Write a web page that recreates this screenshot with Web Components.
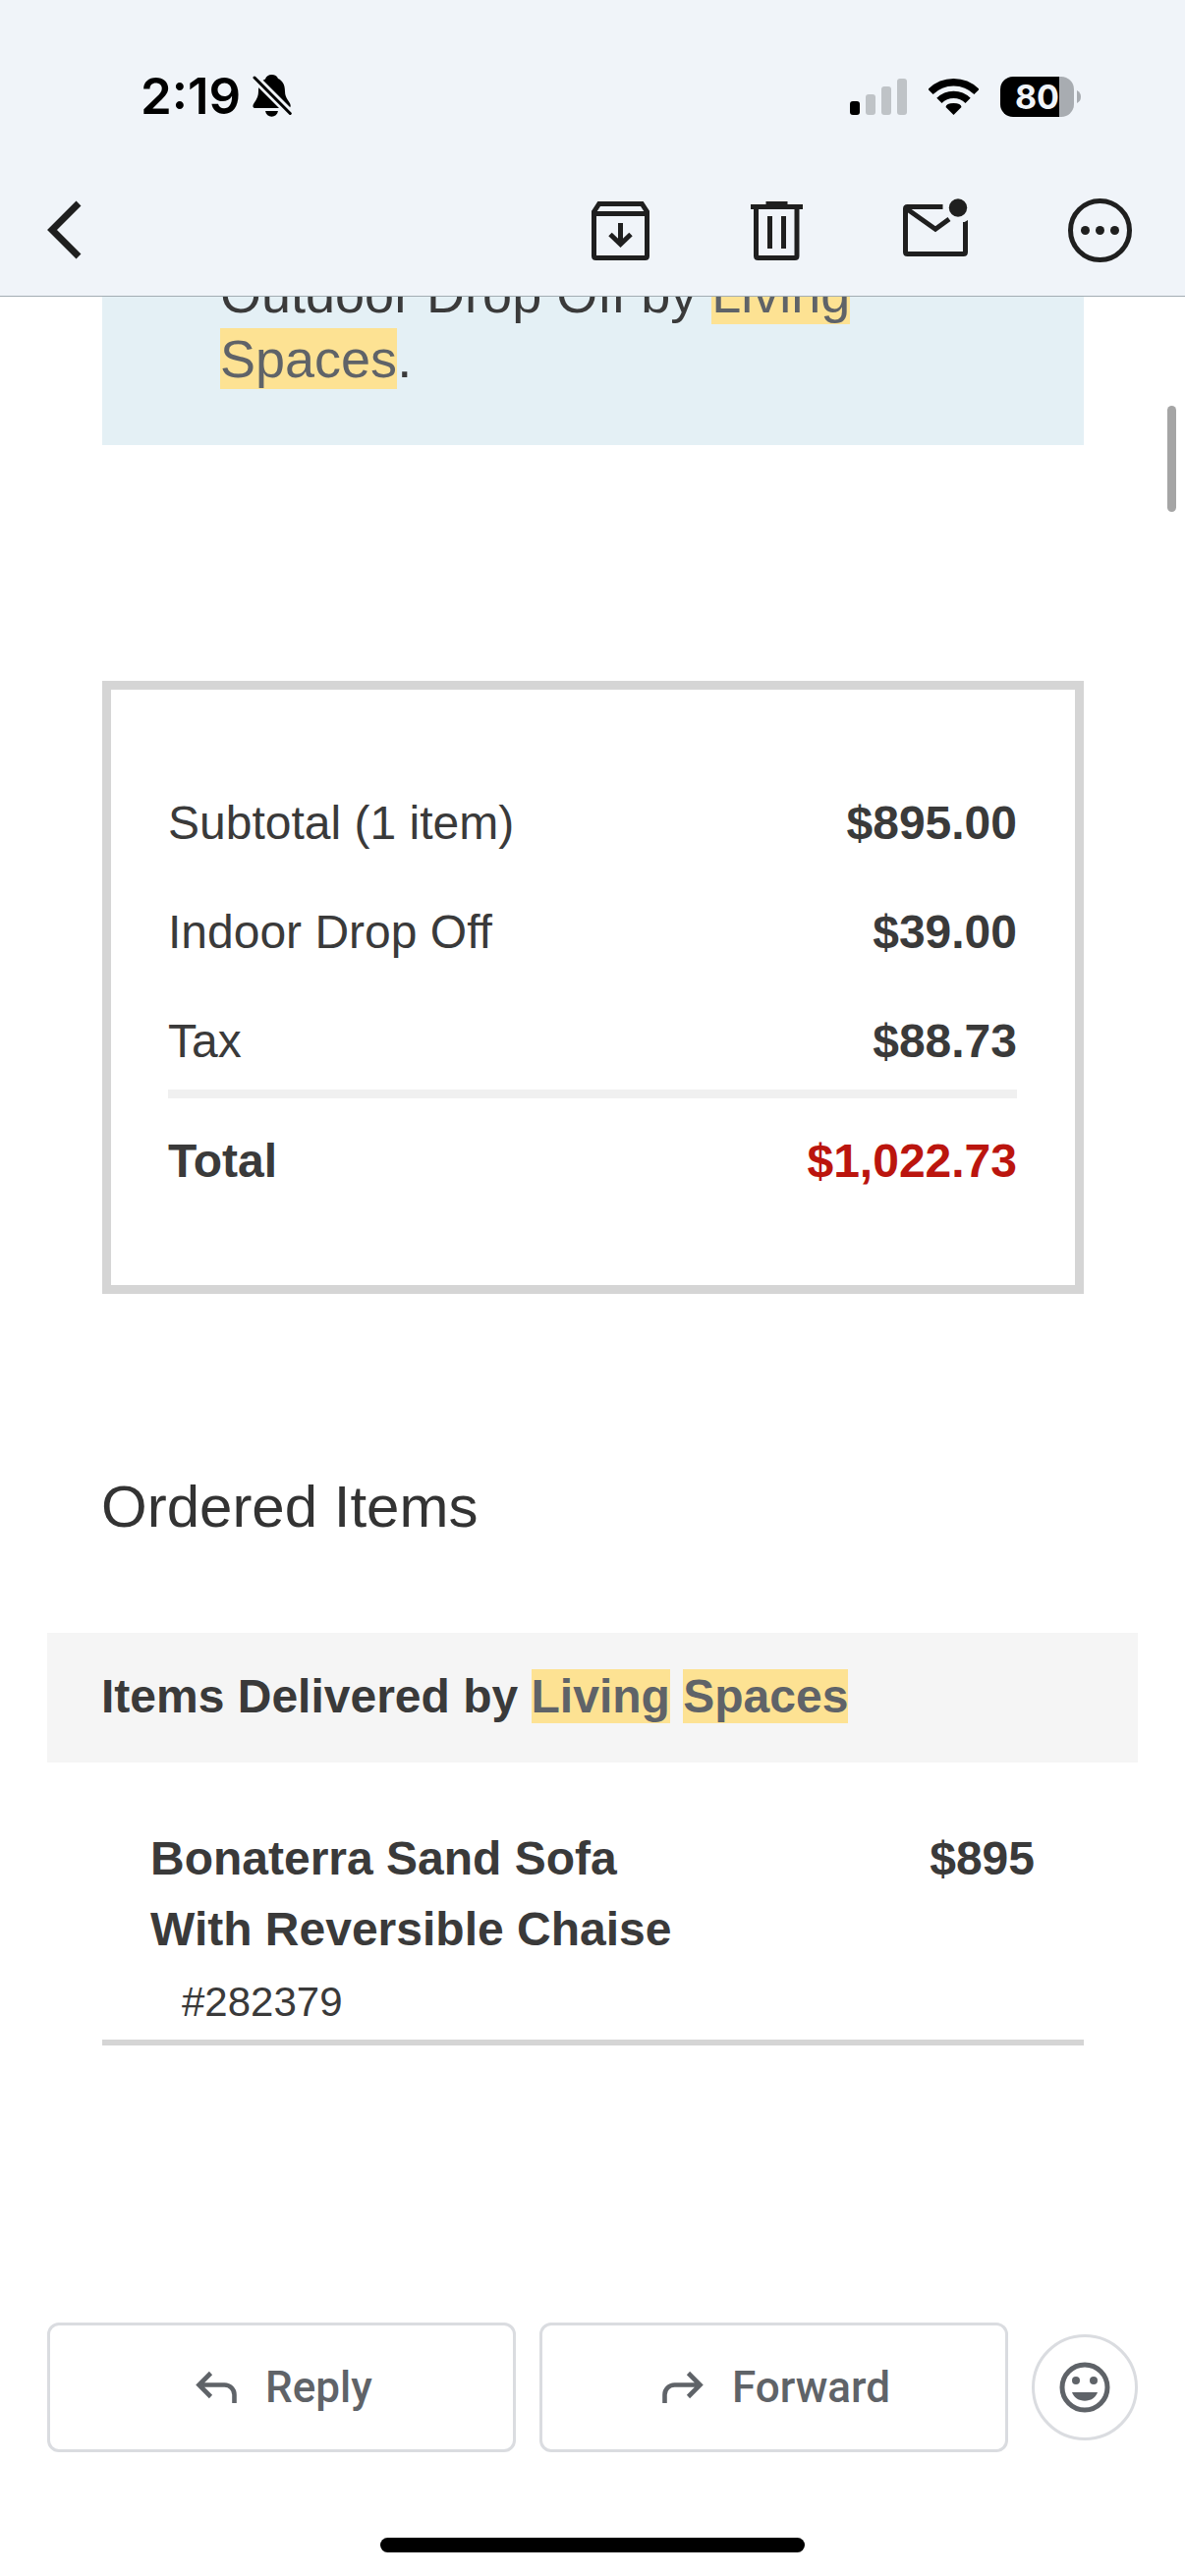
<!DOCTYPE html>
<html lang="en">
<head>
<meta charset="utf-8">
<meta name="viewport" content="width=device-width, initial-scale=1">
<title>Order confirmation</title>
<style>
  :root {
    --bar: #f0f4f9;
    --ink: #1f1f1f;
    --text: #3a3a3a;
    --muted: #5f6368;
    --line: #d5d5d5;
    --outline: #dadce0;
    --hit: #fde293;
    --edge: 48px;
    --inset: 103px;
  }
  body {
    margin: 0;
    min-height: 100vh;
    display: flex;
    flex-direction: column;
    background: #fff;
    color: var(--text);
    font-family: "Liberation Sans", Arial, sans-serif;
  }
</style>
</head>
<body>
<mail-header>
  <status-bar time="2:19" battery="80"></status-bar>
  <mail-toolbar></mail-toolbar>
</mail-header>

<message-view>
  <delivery-notice>Outdoor Drop Off by <search-hit>Living</search-hit> <search-hit>Spaces</search-hit>.</delivery-notice>
  <order-summary>
    <summary-line label="Subtotal (1 item)" amount="$895.00"></summary-line>
    <summary-line label="Indoor Drop Off" amount="$39.00"></summary-line>
    <summary-line label="Tax" amount="$88.73"></summary-line>
    <summary-line label="Total" amount="$1,022.73" total></summary-line>
  </order-summary>
  <ordered-items>
    <span slot="title">Ordered Items</span>
    <span slot="group">Items Delivered by <search-hit>Living</search-hit> <search-hit>Spaces</search-hit></span>
    <order-item>
      <span slot="name">Bonaterra Sand Sofa With Reversible Chaise</span>
      <span slot="price">$895</span>
      <span slot="sku">#282379</span>
    </order-item>
  </ordered-items>
</message-view>

<reply-bar></reply-bar>

<script>
  const define = (name, html, setup) => {
    const template = document.createElement('template');
    template.innerHTML = html;
    customElements.define(name, class extends HTMLElement {
      constructor() {
        super();
        this.attachShadow({ mode: 'open' }).append(template.content.cloneNode(true));
        if (setup) setup(this, this.shadowRoot);
      }
    });
  };

  define('search-hit', `
    <style>
      :host { display: inline; }
      mark { background: var(--hit); color: var(--muted); padding: 1px 0; }
    </style><mark><slot></slot></mark>`);

  define('mail-header', `
    <style>
      :host { display: block; background: var(--bar); border-bottom: 1px solid #a3adb3; flex: none; }
    </style><slot></slot>`);

  define('status-bar', `
    <style>
      :host {
        display: flex; align-items: center; justify-content: space-between;
        height: 84px; padding: 56px 106px 29px 143px; color: #000;
        font-family: Inter, sans-serif;
      }
      div { display: flex; align-items: center; }
      .left { gap: 12px; }
      .right { gap: 22px; }
      .time { font-size: 51px; font-weight: 600; line-height: 60px; }
      svg { display: block; }
      .battery { gap: 3px; }
      .cell {
        width: 75px; height: 41px; border-radius: 13px; justify-content: center;
        background: linear-gradient(90deg, #000 80%, #a8acb1 80%);
        color: var(--bar); font-size: 34px; font-weight: 700; line-height: 41px;
      }
    </style>
    <div class="left">
      <span class="time"></span>
      <svg width="40" height="46" viewBox="0 0 40 46" aria-label="Silent">
        <path d="M.4 33C.4 29.500 6 26.500 6 18C6 10.500 9 7 13 5.500C14 2.500 16.200 1 19.500 1C22.800 1 25 2.500 26 5C30.500 7 33 11 33 18C33 26 38.700 28.500 38.700 32.500C38.700 34.200 38 35 36 35H3C1.400 35 .4 34.400 .4 33Z"/>
        <path d="M13 38H26C25.200 41.600 22.800 43.700 19.500 43.700C16.200 43.700 13.800 41.600 13 38Z"/>
        <path d="M-1 1L41.500 43.500" stroke="#f0f4f9" stroke-width="8.500"/>
        <path d="M2 4L38.300 40.500" stroke="#000" stroke-width="3" stroke-linecap="round"/>
      </svg>
    </div>
    <div class="right">
      <svg width="58" height="37" viewBox="0 0 58 37" aria-label="Signal">
        <rect y="23" width="10" height="14" rx="3"/>
        <g fill="#bfc3c7"><rect x="16" y="16" width="10" height="21" rx="3"/><rect x="32" y="8" width="10" height="29" rx="3"/><rect x="48" width="10" height="37" rx="3"/></g>
      </svg>
      <svg width="51" height="37" viewBox="0 0 51 37" aria-label="Wi-Fi">
        <g fill="none" stroke="#000" stroke-width="7.400"><path d="M2 13.500A33.200 33.200 0 0 1 49 13.500"/><path d="M10.900 22.400A20.700 20.700 0 0 1 40.100 22.400"/></g>
        <path d="M25.500 37L17.500 29Q18 25 25.500 25Q33 25 33.500 29Z"/>
      </svg>
      <div class="battery">
        <div class="cell"></div>
        <svg width="4" height="13" viewBox="0 0 4 13"><path d="M0 0Q4 2 4 6.500Q4 11 0 13Z" fill="#a8acb1"/></svg>
      </div>
    </div>`, (host, root) => {
      root.querySelector('.time').textContent = host.getAttribute('time');
      root.querySelector('.cell').textContent = host.getAttribute('battery');
    });

  define('mail-toolbar', `
    <style>
      :host { display: flex; justify-content: space-between; align-items: center; height: 132px; padding: 0 45px 0 24px; }
      div { display: flex; gap: 76px; }
      button { border: 0; padding: 0; background: none; color: var(--ink); }
      svg { display: block; width: 84px; height: 84px; fill: none; stroke: currentColor; stroke-width: 5; }
      .solid { fill: currentColor; stroke: none; }
    </style>
    <button aria-label="Back"><svg viewBox="0 0 84 84"><path d="M56 14L29 41L56 68" stroke-width="7"/></svg></button>
    <div>
      <button aria-label="Archive"><svg viewBox="0 0 84 84">
        <path d="M7.500 22.500L12.700 14.500H56.300L61.500 22.500V67.500Q61.500 69.500 59.500 69.500H9.500Q7.500 69.500 7.500 67.500ZM7.500 24.500H61.500M34.500 34V55M24 45.500L34.500 55.500L45 45.500"/>
      </svg></button>
      <button aria-label="Delete"><svg viewBox="0 0 84 84">
        <path d="M7 17.500H60M22.500 14.500H44.500M12.500 18V67.500Q12.500 69.500 14.500 69.500H52Q54 69.500 54 67.500V18M26.500 27V60M40.500 27V60"/>
      </svg></button>
      <button aria-label="Mark as unread"><svg viewBox="0 0 84 84">
        <path d="M42.500 17.500H6.500Q4.500 17.500 4.500 19.500V63.500Q4.500 65.500 6.500 65.500H63.500Q65.500 65.500 65.500 63.500V33M5 19L35 40.200L49 30"/>
        <path class="solid" d="M63 34L68 31V35H63Z"/><circle class="solid" cx="58" cy="18.500" r="9.200"/>
      </svg></button>
      <button aria-label="More options"><svg viewBox="0 0 84 84">
        <circle cx="42.500" cy="41.500" r="30"/>
        <g class="solid"><circle cx="27.500" cy="41.500" r="4.500"/><circle cx="42.500" cy="41.500" r="4.500"/><circle cx="57.500" cy="41.500" r="4.500"/></g>
      </svg></button>
    </div>`);

  /* The message is scrolled, so its first visible line starts above the fold of the header. */
  define('message-view', `
    <style>
      :host { display: block; flex: 1; position: relative; overflow: hidden; }
      .thumb { position: absolute; top: 111px; right: 9px; width: 9px; height: 108px; border-radius: 5px; background: #a5a5a5; }
      .scrolled { margin-top: -36px; }
    </style>
    <div class="scrolled"><slot></slot></div>
    <div class="thumb"></div>`);

  define('delivery-notice', `
    <style>
      :host { display: block; margin: 0 var(--inset) 0 104px; padding: 0 120px 55px; background: #e4f0f5; font-size: 54px; line-height: 66px; }
      p { margin: 0; }
    </style><p><slot></slot></p>`);

  define('summary-line', `<style>:host { display: none; }</style>`);

  define('order-summary', `
    <style>
      :host { display: block; margin: 240px var(--inset) 0 104px; padding: 74px 59px 77px 58px; border: 9px solid var(--line); }
      table { width: 100%; border-collapse: separate; border-spacing: 0; font-size: 48px; line-height: 54px; }
      th, td { padding: 35px 0 22px; }
      th { text-align: left; font-weight: 400; }
      td { text-align: right; font-weight: 700; }
      .total th, .total td { padding-top: 37px; border-top: 9px solid #f0f0f0; font-weight: 700; }
      .total td { color: #bb150e; }
    </style>
    <table><tbody></tbody></table>`, (host, root) => {
      const body = root.querySelector('tbody');
      for (const line of host.querySelectorAll('summary-line')) {
        const row = body.insertRow();
        const label = document.createElement('th');
        label.scope = 'row';
        label.textContent = line.getAttribute('label');
        row.append(label);
        row.insertCell().textContent = line.getAttribute('amount');
        row.classList.toggle('total', line.hasAttribute('total'));
      }
    });

  define('ordered-items', `
    <style>
      :host { display: block; margin-top: 183px; }
      h2 { margin: 0 var(--inset) 94px; font-size: 60px; line-height: 68px; font-weight: 400; color: #333; }
      h3 { margin: 0 var(--edge) 62px; padding: 38px 55px 40px; background: #f5f5f5; font-size: 48px; line-height: 54px; }
    </style>
    <h2><slot name="title"></slot></h2>
    <h3><slot name="group"></slot></h3>
    <slot></slot>`);

  define('order-item', `
    <style>
      :host { display: block; margin: 0 var(--inset) 0 104px; padding: 0 50px 14px 49px; border-bottom: 6px solid var(--line); }
      .row { display: flex; justify-content: space-between; font-size: 48px; font-weight: 700; line-height: 72px; }
      .name { max-width: 62%; }
      .sku { padding: 14px 32px 0; font-size: 42px; line-height: 48px; }
    </style>
    <div class="row"><div class="name"><slot name="name"></slot></div><slot name="price"></slot></div>
    <div class="sku"><slot name="sku"></slot></div>`);

  define('reply-bar', `
    <style>
      :host { display: flex; flex-direction: column; align-items: center; gap: 87px; padding: 0 var(--edge) 24px; flex: none; }
      .actions { display: flex; align-items: center; gap: 24px; align-self: stretch; }
      button {
        display: flex; align-items: center; justify-content: center; gap: 28px; flex: 1;
        box-sizing: border-box; height: 132px; padding: 0; border: 3px solid var(--outline); border-radius: 12px;
        background: #fff; color: var(--muted); font: 500 44px/48px Roboto, sans-serif;
      }
      .emoji { flex: none; width: 108px; height: 108px; border-radius: 50%; }
      svg { display: block; width: 48px; height: 48px; fill: none; stroke: currentColor; stroke-width: 4.6; }
      .emoji svg { width: 54px; height: 54px; }
      .solid { fill: currentColor; stroke: none; }
      .home { width: 432px; height: 15px; border-radius: 8px; background: #000; }
    </style>
    <div class="actions">
      <button><svg viewBox="0 0 48 48"><path d="M8.500 21.500H34.500A10 10 0 0 1 44.500 31.500V40M20.500 9.500L8.500 21.500L20.500 33.500"/></svg>Reply</button>
      <button><svg viewBox="0 0 48 48"><path d="M43.500 21.500H17.500A10 10 0 0 0 7.500 31.500V40M31.500 9.500L43.500 21.500L31.500 33.500"/></svg>Forward</button>
      <button class="emoji" aria-label="Add emoji reaction"><svg viewBox="0 0 54 54">
        <circle cx="27" cy="27" r="23" stroke-width="5"/>
        <g class="solid"><circle cx="18" cy="20" r="4"/><circle cx="36" cy="20" r="4"/><path d="M14 32H40C38 37.500 33 40.700 27 40.700C21 40.700 16 37.500 14 32Z"/></g>
      </svg></button>
    </div>
    <div class="home"></div>`);
</script>
</body>
</html>
